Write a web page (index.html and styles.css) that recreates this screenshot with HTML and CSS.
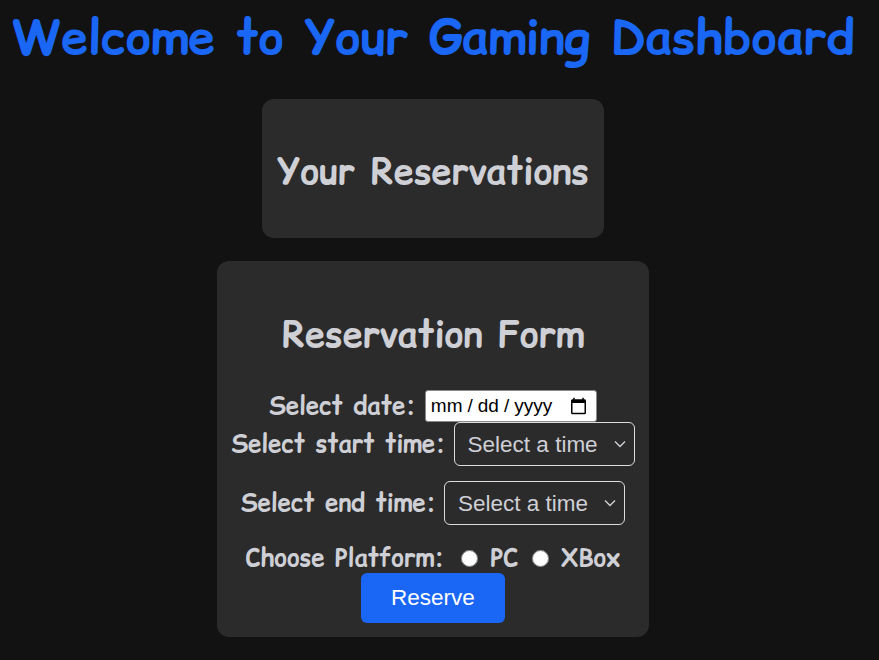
FILE: index.html
```html
<!DOCTYPE html>
<html>
<head>
<meta charset="utf-8">
<link rel="stylesheet" href="styles.css">
</head>
<body>
<div class="page">
  <h1 class="title">Welcome to Your Gaming Dashboard</h1>
  <section class="card reservations">
    <h2 class="card-title">Your Reservations</h2>
  </section>
  <section class="card form-card">
    <h2 class="card-title">Reservation Form</h2>
    <form class="form">
      <div class="row row-date">
        <label class="label" for="date">Select date:</label>
        <input class="date" id="date" type="date">
      </div>
      <div class="row row-start">
        <label class="label" for="start">Select start time:</label>
        <div class="select-wrap">
          <select class="select" id="start"><option>Select a time</option></select>
          <svg class="chevron" width="12" height="8" viewBox="0 0 12 8"><path d="M1 1.5 L6 6.5 L11 1.5" fill="none" stroke="#cfcfd6" stroke-width="1.4"/></svg>
        </div>
      </div>
      <div class="row row-end">
        <label class="label" for="end">Select end time:</label>
        <div class="select-wrap">
          <select class="select" id="end"><option>Select a time</option></select>
          <svg class="chevron" width="12" height="8" viewBox="0 0 12 8"><path d="M1 1.5 L6 6.5 L11 1.5" fill="none" stroke="#cfcfd6" stroke-width="1.4"/></svg>
        </div>
      </div>
      <div class="row row-platform">
        <span class="label">Choose Platform:</span>
        <label class="radio"><input type="radio" name="p"><span>PC</span></label>
        <label class="radio"><input type="radio" name="p"><span>XBox</span></label>
      </div>
      <button class="btn" type="button">Reserve</button>
    </form>
  </section>
</div>
</body>
</html>
```
FILE: styles.css
```css
html, body {
  margin: 0;
  background: #121212;
}
body {
  font-family: "Comic Relief", "Comic Sans MS", cursive;
  color: #cfcfd6;
}
.page {
  width: 866px;
  display: flex;
  flex-direction: column;
  align-items: center;
}
.title {
  margin: 3px 0 29px;
  font-size: 48px;
  color: #1a66f5;
  font-weight: bold;
  text-align: center;
  white-space: nowrap;
}
.card {
  background: #2b2b2b;
  border-radius: 12px;
  box-sizing: border-box;
}
.reservations {
  width: 342px;
  height: 139px;
  display: flex;
  align-items: center;
  justify-content: center;
}
.reservations .card-title {
  margin-top: 4px;
}
.card-title {
  margin: 0;
  font-size: 36px;
  font-weight: bold;
  color: #cfcfd6;
  line-height: 44px;
}
.form-card {
  margin-top: 23px;
  width: 432px;
  height: 376px;
  padding-top: 51px;
  text-align: center;
}
.form {
  margin-top: 33px;
  display: flex;
  flex-direction: column;
  align-items: center;
}
.row {
  display: flex;
  align-items: center;
  justify-content: center;
}
.label {
  font-size: 24px;
  font-weight: bold;
  line-height: 30px;
  margin-right: 8px;
}
.row-date .label { margin-right: 9px; }
.date {
  font-family: "Liberation Sans", Arial, sans-serif;
  font-size: 19px;
  height: 32px;
  width: 172px;
  box-sizing: border-box;
  border: 1px solid #8a8a8a;
  border-radius: 3px;
  background: #fff;
  color: #000;
  padding: 0 6px 0 4px;
  margin-top: 1px;
}
.date::-webkit-datetime-edit-text {
  padding: 0 4px;
}
.select-wrap {
  position: relative;
  display: flex;
}
.select {
  appearance: none;
  -webkit-appearance: none;
  font-family: "Liberation Sans", Arial, sans-serif;
  font-size: 22.5px;
  color: #cfcfd6;
  background: transparent;
  border: 1px solid #dcdcdc;
  border-radius: 6px;
  height: 44px;
  width: 181px;
  padding: 0 13px;
  box-sizing: border-box;
}
.chevron {
  position: absolute;
  right: 9px;
  top: 18px;
  pointer-events: none;
}
.row-end { margin-top: 15px; }
.row-platform { margin-top: 18px; }
.radio {
  font-size: 24px;
  font-weight: bold;
  line-height: 30px;
  display: flex;
  align-items: center;
  gap: 12px;
  margin-left: 9px;
}
.radio + .radio { margin-left: 14px; }
.radio input {
  width: 17px;
  height: 17px;
  margin: 0;
}
.btn {
  margin-top: 0;
  width: 144px;
  height: 50px;
  background: #1a66f5;
  color: #fff;
  border: none;
  border-radius: 6px;
  font-family: "Liberation Sans", Arial, sans-serif;
  font-size: 22.5px;
}
```
